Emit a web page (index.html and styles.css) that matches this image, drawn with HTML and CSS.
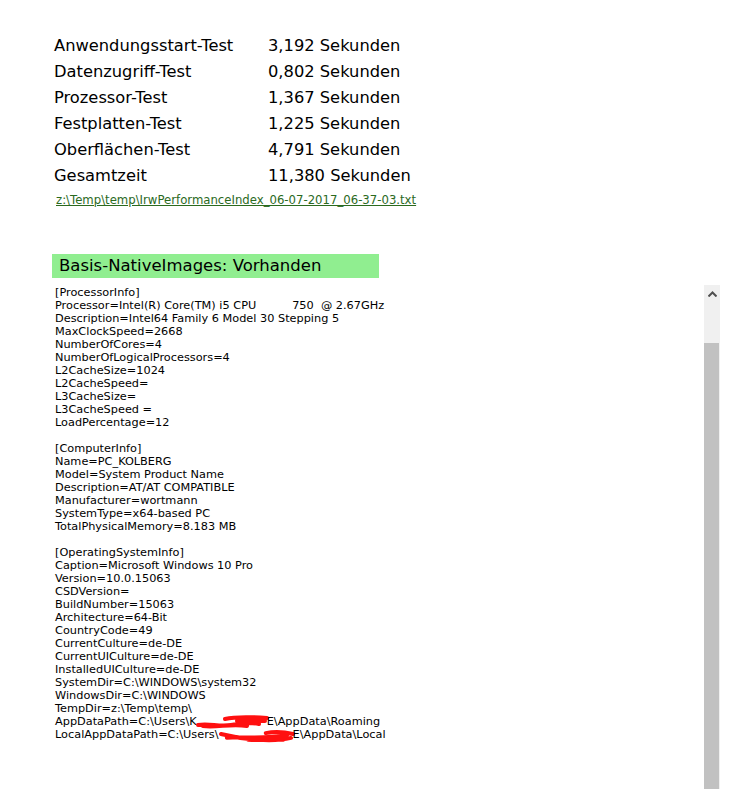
FILE: index.html
```html
<!DOCTYPE html>
<html lang="de">
<head>
<meta charset="UTF-8">
<meta name="viewport" content="width=device-width, initial-scale=1.0">
<title>Performance-Index</title>
<link rel="stylesheet" href="styles.css">
</head>
<body>

<div class="page">
  <table class="results">
    <tr><td class="label">Anwendungsstart-Test</td><td>3,192 Sekunden</td></tr>
    <tr><td class="label">Datenzugriff-Test</td><td>0,802 Sekunden</td></tr>
    <tr><td class="label">Prozessor-Test</td><td>1,367 Sekunden</td></tr>
    <tr><td class="label">Festplatten-Test</td><td>1,225 Sekunden</td></tr>
    <tr><td class="label">Oberflächen-Test</td><td>4,791 Sekunden</td></tr>
    <tr><td class="label">Gesamtzeit</td><td>11,380 Sekunden</td></tr>
  </table>

  <a class="file-link" href="#">z:\Temp\temp\IrwPerformanceIndex_06-07-2017_06-37-03.txt</a>

  <div class="status">Basis-NativeImages: Vorhanden</div>

  <div class="info-box">
    <pre class="info">[ProcessorInfo]
Processor=Intel(R) Core(TM) i5 CPU          750  @ 2.67GHz
Description=Intel64 Family 6 Model 30 Stepping 5
MaxClockSpeed=2668
NumberOfCores=4
NumberOfLogicalProcessors=4
L2CacheSize=1024
L2CacheSpeed=
L3CacheSize=
L3CacheSpeed =
LoadPercentage=12

[ComputerInfo]
Name=PC_KOLBERG
Model=System Product Name
Description=AT/AT COMPATIBLE
Manufacturer=wortmann
SystemType=x64-based PC
TotalPhysicalMemory=8.183 MB

[OperatingSystemInfo]
Caption=Microsoft Windows 10 Pro
Version=10.0.15063
CSDVersion=
BuildNumber=15063
Architecture=64-Bit
CountryCode=49
CurrentCulture=de-DE
CurrentUICulture=de-DE
InstalledUICulture=de-DE
SystemDir=C:\WINDOWS\system32
WindowsDir=C:\WINDOWS
TempDir=z:\Temp\temp\
AppDataPath=C:\Users\K<svg class="redact r1" viewBox="0 0 70 13"><path d="M1 10 C12 8, 22 12, 34 10 S52 7, 62 9 M6 11 C20 13, 34 8, 50 11 M28 4 C40 1, 56 2, 70 3 M40 6 C50 5, 60 6, 68 6" /></svg>E\AppData\Roaming
LocalAppDataPath=C:\Users\<svg class="redact r2" viewBox="0 0 76 13"><path d="M2 6 C14 9, 26 11, 40 12 S62 13, 74 10 M8 10 C26 8, 44 12, 70 7 M48 5 C58 3, 68 4, 76 6 M30 12 C44 13, 56 11, 66 12" /></svg>E\AppData\Local</pre>
    <div class="scrollbar">
      <div class="scroll-up">
        <svg width="9" height="6" viewBox="0 0 9 6"><path d="M0.5 5.5 L4.5 1.5 L8.5 5.5" fill="none" stroke="#505050" stroke-width="2"/></svg>
      </div>
      <div class="scroll-track"></div>
      <div class="scroll-thumb"></div>
    </div>
  </div>
</div>

</body>
</html>
```

FILE: styles.css
```css
html, body {
  margin: 0;
  padding: 0;
  background-color: #fff;
  overflow: hidden;
}
body {
  font-family: Verdana, "DejaVu Sans", sans-serif;
  color: #000;
}
.page {
  padding: 33px 0 0 52px;
}
.results {
  border-collapse: collapse;
  font-size: 16.3px;
  margin-left: 2px;
}
.results td {
  padding: 0;
  height: 26px;
  line-height: 26px;
  white-space: nowrap;
}
.results .label {
  width: 214px;
}
.file-link {
  display: block;
  margin: 4px 0 0 4px;
  font-size: 11.7px;
  line-height: 14px;
  color: #2b6a1e;
  text-decoration: underline;
}
.status {
  margin-top: 47px;
  width: 320px;
  height: 24px;
  line-height: 24px;
  padding-left: 7px;
  background-color: #90ee90;
  font-size: 16.5px;
}
.info-box {
  display: flex;
  width: 668px;
  height: 520px;
  margin-top: 7px;
}
.info {
  flex: 1;
  margin: 0;
  padding: 1px 0 0 3px;
  font-family: Verdana, "DejaVu Sans", sans-serif;
  font-size: 11.3px;
  line-height: 13px;
  white-space: pre;
}
.redact {
  display: inline-block;
  height: 13px;
  vertical-align: -3px;
  overflow: visible;
}
.r1 {
  width: 70px;
}
.r2 {
  width: 74px;
}
.redact path {
  fill: none;
  stroke: #ff1010;
  stroke-width: 4;
  stroke-linecap: round;
}
.scrollbar {
  width: 16px;
  display: flex;
  flex-direction: column;
  background-color: #f0f0f0;
}
.scroll-up {
  height: 17px;
  display: flex;
  justify-content: center;
  align-items: center;
}
.scroll-track {
  height: 41px;
}
.scroll-thumb {
  flex: 1;
  margin: 0 1px 0 0;
  background-color: #c1c1c1;
}
```
